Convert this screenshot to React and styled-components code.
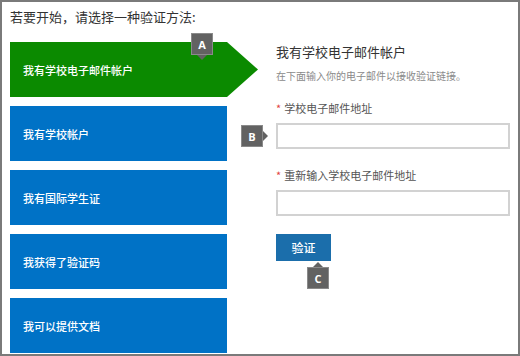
import React from "react";
import styled, { createGlobalStyle, css } from "styled-components";

const GlobalStyle = createGlobalStyle`
  html, body {
    margin: 0;
    padding: 0;
    background: #fff;
  }
  body {
    font-family: "Noto Sans CJK SC", "Noto Sans", sans-serif;
  }
`;

const Frame = styled.div`
  position: relative;
  width: 520px;
  height: 356px;
  box-sizing: border-box;
  border: 2px solid #7a7a7a;
  padding: 5px 8px 0 8px;
  overflow: hidden;
  background: #fff;
`;

const Heading = styled.div`
  font-size: 13px;
  line-height: 20px;
  color: #333;
`;

const Body = styled.div`
  display: flex;
  margin-top: 15px;
`;

const Options = styled.div`
  display: flex;
  flex-direction: column;
  gap: 9px;
  width: 248px;
  flex-shrink: 0;
`;

const OptionWrap = styled.div`
  position: relative;
`;

const Tile = styled.div`
  display: flex;
  align-items: center;
  box-sizing: border-box;
  height: 55px;
  width: ${(p) => (p.$active ? "248px" : "217px")};
  padding-left: 13px;
  font-size: 11px;
  font-weight: 500;
  color: #fff;
  background: ${(p) => (p.$active ? "#0b8a00" : "#0072c6")};
  clip-path: ${(p) =>
    p.$active
      ? "polygon(0 0, 217px 0, 100% 50%, 217px 100%, 0 100%)"
      : "none"};
`;

const Badge = styled.div`
  position: absolute;
  width: 22px;
  height: 22px;
  box-sizing: border-box;
  background: #626262;
  border: 1px solid #8a8a8a;
  color: #fff;
  font-family: "Open Sans", "Liberation Sans", sans-serif;
  font-weight: 700;
  font-size: 11px;
  display: flex;
  align-items: center;
  justify-content: center;
  left: ${(p) => p.$x}px;
  top: ${(p) => p.$y}px;
  z-index: 2;
  &::after {
    content: "";
    position: absolute;
    width: 0;
    height: 0;
    ${(p) =>
      p.$dir === "down" &&
      css`
        left: 5px;
        top: 21px;
        border-left: 5px solid transparent;
        border-right: 5px solid transparent;
        border-top: 5px solid #626262;
      `}
    ${(p) =>
      p.$dir === "right" &&
      css`
        left: 21px;
        top: 5px;
        border-top: 5px solid transparent;
        border-bottom: 5px solid transparent;
        border-left: 5px solid #626262;
      `}
    ${(p) =>
      p.$dir === "up" &&
      css`
        left: 5px;
        top: -6px;
        border-left: 5px solid transparent;
        border-right: 5px solid transparent;
        border-bottom: 5px solid #626262;
      `}
  }
`;

const Form = styled.div`
  margin-left: 18px;
  width: 235px;
  display: flex;
  flex-direction: column;
  align-items: flex-start;
`;

const FormTitle = styled.div`
  font-size: 13px;
  line-height: 20px;
  color: #333;
`;

const FormHint = styled.div`
  margin-top: 7px;
  font-size: 10px;
  line-height: 14px;
  color: #8a8a8a;
`;

const Label = styled.div`
  margin-top: ${(p) => p.$gap}px;
  font-size: 11px;
  line-height: 16px;
  color: #555;
`;

const Star = styled.span`
  color: #e2433f;
  margin-right: 3px;
`;

const Field = styled.div`
  position: relative;
  margin-top: 7px;
  width: 100%;
`;

const Input = styled.input`
  display: block;
  width: 100%;
  height: 26px;
  box-sizing: border-box;
  border: 2px solid #d2d2d2;
  margin: 0;
  padding: 0 6px;
  background: #fff;
  outline: none;
`;

const ButtonWrap = styled.div`
  position: relative;
  margin-top: 18px;
`;

const Button = styled.button`
  width: 55px;
  height: 27px;
  border: none;
  margin: 0;
  padding: 0;
  background: #1b6eab;
  color: #fff;
  font-family: "Noto Sans CJK SC", sans-serif;
  font-size: 12px;
  font-weight: 500;
  cursor: pointer;
`;

const options = [
  "我有学校电子邮件帐户",
  "我有学校帐户",
  "我有国际学生证",
  "我获得了验证码",
  "我可以提供文档",
];

export default function App() {
  return (
    <>
      <GlobalStyle />
      <Frame>
        <Heading>若要开始，请选择一种验证方法:</Heading>
        <Body>
          <Options>
            {options.map((label, i) => (
              <OptionWrap key={label}>
                <Tile $active={i === 0}>{label}</Tile>
                {i === 0 && (
                  <Badge $x={181} $y={-9} $dir="down">
                    A
                  </Badge>
                )}
              </OptionWrap>
            ))}
          </Options>
          <Form>
            <FormTitle>我有学校电子邮件帐户</FormTitle>
            <FormHint>在下面输入你的电子邮件以接收验证链接。</FormHint>
            <Label $gap={17}>
              <Star>*</Star>学校电子邮件地址
            </Label>
            <Field>
              <Input type="text" />
              <Badge $x={-35} $y={2} $dir="right">
                B
              </Badge>
            </Field>
            <Label $gap={18}>
              <Star>*</Star>重新输入学校电子邮件地址
            </Label>
            <Field>
              <Input type="text" />
            </Field>
            <ButtonWrap>
              <Button>验证</Button>
              <Badge $x={31} $y={33} $dir="up">
                C
              </Badge>
            </ButtonWrap>
          </Form>
        </Body>
      </Frame>
    </>
  );
}
